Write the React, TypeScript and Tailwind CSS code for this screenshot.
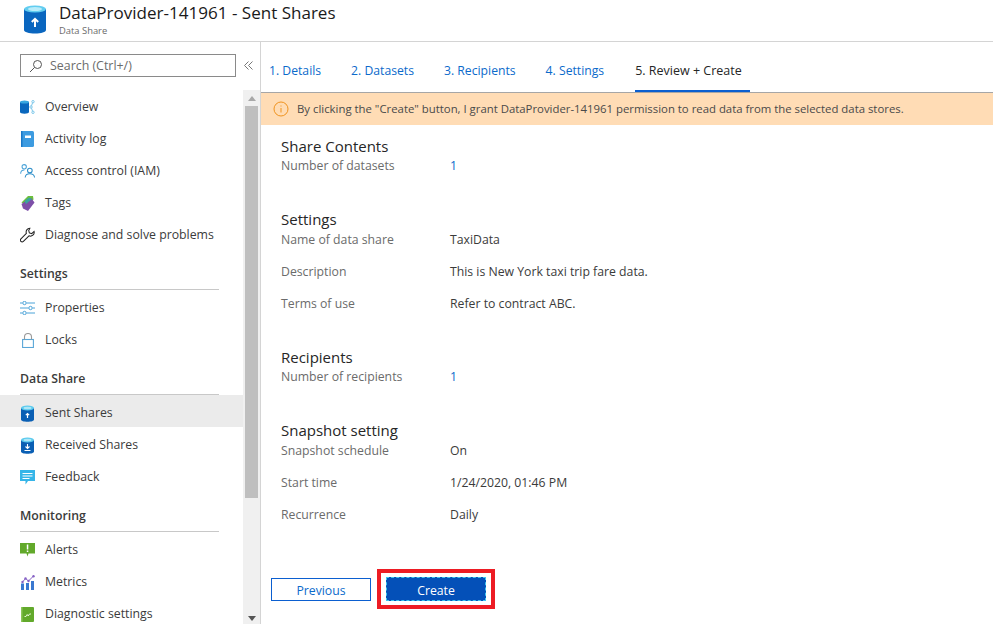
import React from "react";

const font = { fontFamily: '"Open Sans", "Noto Sans", sans-serif' };

const Cyl = ({ kind }: { kind: "up" | "down" }) => (
  <svg width="13" height="17" viewBox="0 0 13 17">
    <path d="M0 3v11.500c0 1.300 2.800 2.300 6.500 2.300s6.500-1 6.500-2.300V3z" fill="#0a5fb4" />
    <ellipse cx="6.500" cy="3" rx="6.500" ry="2.400" fill="#5ccbee" />
    <ellipse cx="6.500" cy="3" rx="4" ry="1.200" fill="#aee6f7" />
    {kind === "up" ? (
      <path d="M6.500 13V8.500M4.800 10.200l1.700-1.700 1.700 1.700" stroke="#fff" strokeWidth="1.200" fill="none" />
    ) : (
      <path d="M6.500 7v4M4.500 9.500l2 2 2-2M3.500 13.500h6" stroke="#fff" strokeWidth="1.100" fill="none" />
    )}
  </svg>
);

const icons: Record<string, React.ReactNode> = {
  overview: (
    <svg width="15" height="14" viewBox="0 0 15 14">
      <path d="M0 2v10c0 1 2 1.700 4.500 1.700S9 13 9 12V2z" fill="#0a67bd" />
      <ellipse cx="4.500" cy="2" rx="4.500" ry="1.600" fill="#39a7e0" />
      <circle cx="13" cy="1.700" r="1.200" fill="none" stroke="#7cc7ea" />
      <circle cx="11" cy="7" r="1.200" fill="none" stroke="#7cc7ea" />
      <circle cx="13" cy="12.300" r="1.200" fill="none" stroke="#7cc7ea" />
      <path d="M12.500 2.900l-1 3M11.500 8.100l1 3" stroke="#7cc7ea" />
    </svg>
  ),
  log: (
    <svg width="13" height="16" viewBox="0 0 13 16">
      <rect x="0" y="0" width="13" height="16" rx="1.500" fill="#3d9be0" />
      <rect x="0" y="0" width="1.500" height="16" fill="#1a78c8" />
      <rect x="4" y="4.500" width="6" height="2.500" fill="#fff" />
    </svg>
  ),
  iam: (
    <svg width="16" height="16" viewBox="0 0 16 16" fill="none" stroke="#4ba3d8" strokeWidth="1.100">
      <circle cx="4.500" cy="3.500" r="2.300" />
      <path d="M0.700 11c0-2.500 1.500-4 4-4" />
      <circle cx="10.500" cy="7.500" r="2.500" stroke="#2f8fc9" />
      <path d="M5.500 15c.2-2.500 2.200-4 5-4s4.800 1.500 5 4" stroke="#2f8fc9" />
    </svg>
  ),
  tags: (
    <svg width="14" height="15" viewBox="0 0 14 15">
      <path d="M0.500 6.500L7 0h5l.5 3.500L6 10z" fill="#6cbf3d" />
      <path d="M0.500 8L8 2.500l2.500 0 3 4L7 15 2 12.500z" fill="#7d4fa8" />
      <path d="M3.500 5L8 1.500l3 1.500-6 5z" fill="#3ba3a0" />
    </svg>
  ),
  wrench: (
    <svg width="16" height="16" viewBox="0 0 16 16" fill="none" stroke="#222" strokeWidth="1.100">
      <path d="M10.500 0.800a4 4 0 0 0-3.700 5.400L1 12.200a1.800 1.800 0 0 0 2.600 2.600l6-5.900A4 4 0 0 0 15 4.200l-2.500 2.300-2.500-.7-.7-2.500z" />
    </svg>
  ),
  props: (
    <svg width="15" height="14" viewBox="0 0 15 14" fill="none" stroke="#4ba3d8" strokeWidth="1">
      <path d="M0 2h2.500M6.500 2H15M0 7h8.500M12.500 7H15M0 12h2.500M6.500 12H15" />
      <circle cx="4.500" cy="2" r="1.700" />
      <circle cx="10.500" cy="7" r="1.700" />
      <circle cx="4.500" cy="12" r="1.700" />
    </svg>
  ),
  lock: (
    <svg width="12" height="15" viewBox="0 0 12 15" fill="none" strokeWidth="1.100">
      <rect x="0.600" y="6.500" width="10.800" height="8" stroke="#5aa7d8" />
      <path d="M2.500 6.500V4a3.500 3.500 0 0 1 7 0v2.500" stroke="#999" />
    </svg>
  ),
  sent: <Cyl kind="up" />,
  recv: <Cyl kind="down" />,
  feedback: (
    <svg width="15" height="15" viewBox="0 0 15 15">
      <path d="M0 0h15v11H8l-2.500 3.500V11H0z" fill="#36b5e8" />
      <path d="M2.500 3.500h10M2.500 6h10M2.500 8.500h7" stroke="#fff" strokeWidth="1" />
    </svg>
  ),
  alerts: (
    <svg width="15" height="14" viewBox="0 0 15 14">
      <path d="M0 0h15v10.500H8.500L7.500 13.500l-1-3H0z" fill="#62a92b" />
      <rect x="6.800" y="1.500" width="1.500" height="5" fill="#fff" />
      <rect x="6.800" y="7.500" width="1.500" height="1.500" fill="#fff" />
    </svg>
  ),
  metrics: (
    <svg width="14" height="15" viewBox="0 0 14 15">
      <path d="M1.500 7l3-3.500 3 2.500 5-5" stroke="#8661c5" fill="none" />
      <circle cx="1.500" cy="7" r="1.200" fill="#8661c5" />
      <circle cx="4.500" cy="3.500" r="1.200" fill="#8661c5" />
      <circle cx="7.500" cy="6" r="1.200" fill="#8661c5" />
      <circle cx="12.500" cy="1.200" r="1.200" fill="#8661c5" />
      <rect x="0" y="8.500" width="3" height="6.500" fill="#3a78d0" />
      <rect x="5" y="8" width="3" height="7" fill="#3a78d0" />
      <rect x="10" y="6" width="3" height="9" fill="#3a78d0" />
    </svg>
  ),
  diag: (
    <svg width="13" height="15" viewBox="0 0 13 15">
      <rect x="0" y="0" width="13" height="15" rx="1" fill="#62a92b" />
      <rect x="0" y="0" width="1.500" height="15" fill="#8cc65a" />
      <path d="M3.500 9.500h1.500l1.200-2 1 1.500 1.300-2h1.500" stroke="#e2f4d2" fill="none" />
    </svg>
  ),
};

const NavItem = ({
  icon,
  label,
  active,
  low,
}: {
  icon: string;
  label: string;
  active?: boolean;
  low?: boolean;
}) => (
  <div className={`flex h-8 items-center ${low ? "pt-[4px]" : "pt-[2px]"} ${active ? "bg-[#ebebeb]" : ""}`}>
    <div className="ml-5 mr-[10px] flex w-[15px] shrink-0 justify-center">{icons[icon]}</div>
    <span className="text-[12.3px] text-[#3b3b3b]">{label}</span>
  </div>
);

const NavHead = ({ label, className }: { label: string; className: string }) => (
  <div className={`ml-5 mr-[24px] h-[25px] border-b border-[#c8c8c8] ${className}`}>
    <div className="text-[12.3px] font-semibold leading-[17px] text-[#3b3b3b]">{label}</div>
  </div>
);

const Row = ({ label, value, link }: { label: string; value: string; link?: boolean }) => (
  <div className="flex h-8 items-center pt-[2px]">
    <span className="w-[169px] shrink-0 text-[12.25px] text-[#6b6b6b]">{label}</span>
    <span className={`text-[12.25px] ${link ? "text-[#0b6acb]" : "text-[#3b3b3b]"}`}>{value}</span>
  </div>
);

const Section = ({
  title,
  className,
  rowsClass,
  children,
}: {
  title: string;
  className: string;
  rowsClass: string;
  children: React.ReactNode;
}) => (
  <div className={className}>
    <div className="text-[15px] leading-[20px] text-[#262626]">{title}</div>
    <div className={rowsClass}>{children}</div>
  </div>
);

const Tab = ({ label, active }: { label: string; active?: boolean }) => (
  <div
    className={`flex h-[50px] items-center border-b-2 pt-[10px] ${
      active ? "ml-px border-[#0b5fd0] pr-2 text-[12.5px] text-[#262626]" : "border-transparent text-[12.2px] text-[#0b6acb]"
    }`}
  >
    {label}
  </div>
);

export default function App() {
  return (
    <div className="flex h-[624px] w-[993px] flex-col overflow-hidden bg-white" style={font}>
      <header className="flex h-[42px] shrink-0 items-start border-b border-[#d4d4d4] pl-[23px]">
        <svg width="24" height="29" viewBox="0 0 24 29" className="mt-[5px]">
          <path d="M1 4v21c0 2.200 5 3.500 11 3.500s11-1.300 11-3.500V4z" fill="#0a66bf" />
          <ellipse cx="12" cy="4" rx="11" ry="3.600" fill="#62cdf0" />
          <ellipse cx="12" cy="4" rx="7" ry="2" fill="#b8ecfa" />
          <path d="M12 22v-8M8.800 17l3.200-3.200 3.200 3.200" stroke="#fff" strokeWidth="2" fill="none" />
        </svg>
        <div className="ml-[12px] flex flex-col">
          <div className="mt-[1px] text-[17.05px] leading-[24px] text-[#1a1a1a]">DataProvider-141961 - Sent Shares</div>
          <div className="text-[9.4px] leading-[12px] text-[#6b6b6b]">Data Share</div>
        </div>
      </header>
      <div className="flex min-h-0 flex-1">
        <aside className="flex w-[261px] shrink-0 flex-col border-r border-[#d4d4d4]">
          <div className="flex h-[48px] shrink-0 items-start pl-5 pt-3">
            <div className="flex h-[23px] w-[216px] items-center border border-[#8a8a8a] pl-2 pt-[1px]">
              <svg width="14" height="14" viewBox="0 0 14 14" fill="none" stroke="#555" strokeWidth="1">
                <circle cx="8.500" cy="5.500" r="4" />
                <path d="M5.500 8.500L1 13" />
              </svg>
              <span className="ml-[7px] text-[12.4px] text-[#6b6b6b]">Search (Ctrl+/)</span>
            </div>
            <svg width="9" height="9" viewBox="0 0 9 9" fill="none" stroke="#777" className="ml-[8px] mt-[7px]">
              <path d="M4.500 0.500L0.500 4.500l4 4M8.500 0.500l-4 4 4 4" />
            </svg>
          </div>
          <div className="flex min-h-0 flex-1">
            <nav className="w-[243px] shrink-0 overflow-hidden">
              <NavItem icon="overview" label="Overview" />
              <NavItem icon="log" label="Activity log" />
              <NavItem icon="iam" label="Access control (IAM)" />
              <NavItem icon="tags" label="Tags" />
              <NavItem icon="wrench" label="Diagnose and solve problems" />
              <NavHead label="Settings" className="mt-[15px]" />
              <NavItem icon="props" label="Properties" low />
              <NavItem icon="lock" label="Locks" low />
              <NavHead label="Data Share" className="mt-[16px]" />
              <NavItem icon="sent" label="Sent Shares" active low />
              <NavItem icon="recv" label="Received Shares" low />
              <NavItem icon="feedback" label="Feedback" low />
              <NavHead label="Monitoring" className="mt-[16px]" />
              <NavItem icon="alerts" label="Alerts" low />
              <NavItem icon="metrics" label="Metrics" low />
              <NavItem icon="diag" label="Diagnostic settings" low />
            </nav>
            <div className="flex w-[17px] shrink-0 flex-col items-center bg-[#f0f0f0] px-[2px]">
              <div className="flex h-[16px] w-full shrink-0 items-center justify-center">
                <svg width="8" height="5" viewBox="0 0 8 5"><path d="M0 5l4-5 4 5z" fill="#a8a8a8" /></svg>
              </div>
              <div className="h-[392px] w-[13px] shrink-0 bg-[#bfbfbf]" />
              <div className="flex flex-1 items-end pb-[3px]">
                <svg width="8" height="5" viewBox="0 0 8 5"><path d="M0 0l4 5 4-5z" fill="#555" /></svg>
              </div>
            </div>
          </div>
        </aside>
        <main className="flex min-w-0 flex-1 flex-col">
          <div className="flex h-[51px] shrink-0 gap-[30px] border-b border-[#a6a6a6] pl-2">
            <Tab label="1. Details" />
            <Tab label="2. Datasets" />
            <Tab label="3. Recipients" />
            <Tab label="4. Settings" />
            <Tab label="5. Review + Create" active />
          </div>
          <div className="flex h-[32px] shrink-0 items-center bg-[#ffdcb5] pl-3">
            <svg width="16" height="16" viewBox="0 0 16 16" fill="none" stroke="#f0931e">
              <circle cx="8" cy="8" r="7" />
              <path d="M8 7v4.500M8 4.500v1" />
            </svg>
            <span className="ml-2 text-[11.37px] text-[#4a4a4a]">
              By clicking the "Create" button, I grant DataProvider-141961 permission to read data from the selected data stores.
            </span>
          </div>
          <div className="flex-1 pl-5 pt-[11px]">
            <Section title="Share Contents" className="" rowsClass="-mt-[7px]">
              <Row label="Number of datasets" value="1" link />
            </Section>
            <Section title="Settings" className="mt-[28px]" rowsClass="-mt-[6px]">
              <Row label="Name of data share" value="TaxiData" />
              <Row label="Description" value="This is New York taxi trip fare data." />
              <Row label="Terms of use" value="Refer to contract ABC." />
            </Section>
            <Section title="Recipients" className="mt-[28px]" rowsClass="-mt-[7px]">
              <Row label="Number of recipients" value="1" link />
            </Section>
            <Section title="Snapshot setting" className="mt-[28px]" rowsClass="-mt-[6px]">
              <Row label="Snapshot schedule" value="On" />
              <Row label="Start time" value="1/24/2020, 01:46 PM" />
              <Row label="Recurrence" value="Daily" />
            </Section>
            <div className="-ml-[10px] mt-[39px] flex items-center">
              <button className="h-[23px] w-[100px] border border-[#0b5fd0] pt-[3px] text-[12.25px] text-[#0b6acb]">Previous</button>
              <div className="ml-[6px] border-4 border-[#ed1c24] px-[5px] py-[4px]">
                <button className="block h-[24px] w-[100px] border border-dashed border-[#3cc8f0] bg-[#0450b8] pt-[4px] text-[12.25px] text-white">
                  Create
                </button>
              </div>
            </div>
          </div>
        </main>
      </div>
    </div>
  );
}
